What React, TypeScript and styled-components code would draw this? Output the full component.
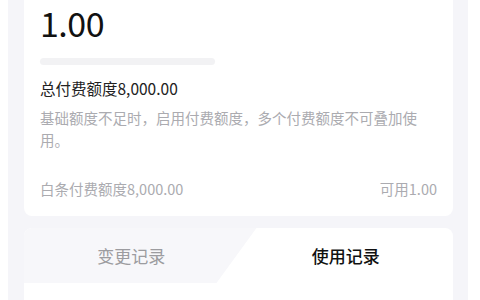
import React, { useState } from 'react';
import styled, { createGlobalStyle } from 'styled-components';

const GlobalStyle = createGlobalStyle`
  html, body {
    margin: 0;
    padding: 0;
    background: #ffffff;
  }
  body {
    padding-left: 8px;
    font-family: "Noto Sans CJK SC", "Noto Sans", sans-serif;
    -webkit-font-smoothing: antialiased;
  }
`;

const Page = styled.div`
  width: 460px;
  min-height: 300px;
  box-sizing: border-box;
  padding: 0 15px 24px 16px;
  background: #f5f5f9;
  display: flex;
  flex-direction: column;
  gap: 12px;
`;

const QuotaCard = styled.section`
  background: #ffffff;
  border-radius: 0 0 8px 8px;
  padding: 0 16px 16px;
  display: flex;
  flex-direction: column;
`;

const Amount = styled.div`
  font-size: 34px;
  line-height: 46px;
  color: #111111;
  letter-spacing: -0.5px;
`;

const Progress = styled.div`
  margin-top: 12px;
  width: 175px;
  height: 7px;
  border-radius: 4px;
  background: #f2f2f4;
  overflow: hidden;
`;

const ProgressFill = styled.div`
  height: 100%;
  background: #e6e6ea;
`;

const TotalLine = styled.div`
  margin-top: 12px;
  font-size: 15.5px;
  line-height: 22px;
  color: #222222;
`;

const Note = styled.p`
  margin: 8px 0 0;
  max-width: 385px;
  font-size: 14.5px;
  line-height: 22px;
  color: #ababb0;
`;

const FooterRow = styled.div`
  margin-top: 27px;
  display: flex;
  justify-content: space-between;
  align-items: center;
  font-size: 14.5px;
  line-height: 22px;
  color: #ababb0;
`;

const TabsCard = styled.section`
  background: #ffffff;
  border-radius: 8px;
  overflow: hidden;
  min-height: 80px;
`;

const TabRow = styled.div`
  display: flex;
  height: 55px;
`;

const Tab = styled.button<{ $active: boolean; $first: boolean }>`
  position: relative;
  flex: 1;
  border: none;
  padding: 0;
  font-family: inherit;
  font-size: 17px;
  font-weight: ${p => (p.$active ? 500 : 400)};
  color: ${p => (p.$active ? '#111111' : '#9c9ca0')};
  background: transparent;
  cursor: pointer;

  /* slanted grey backdrop behind the inactive tab */
  &::before {
    content: '';
    display: ${p => (p.$active ? 'none' : 'block')};
    position: absolute;
    top: 0;
    bottom: 0;
    ${p => (p.$first ? 'left: 0; right: -18px;' : 'left: -18px; right: 0;')}
    background: #f7f7fa;
    clip-path: ${p =>
      p.$first
        ? 'polygon(0 0, 100% 0, calc(100% - 40px) 100%, 0 100%)'
        : 'polygon(0 0, 100% 0, 100% 100%, 40px 100%)'};
  }
`;

const TabLabel = styled.span`
  position: relative;
`;

const tabs = ['变更记录', '使用记录'];

export default function App() {
  const [active, setActive] = useState(1);

  return (
    <>
      <GlobalStyle />
      <Page>
        <QuotaCard>
          <Amount>1.00</Amount>
          <Progress>
            <ProgressFill style={{ width: `${(1 / 8000) * 100}%` }} />
          </Progress>
          <TotalLine>总付费额度8,000.00</TotalLine>
          <Note>基础额度不足时，启用付费额度，多个付费额度不可叠加使用。</Note>
          <FooterRow>
            <span>白条付费额度8,000.00</span>
            <span>可用1.00</span>
          </FooterRow>
        </QuotaCard>
        <TabsCard>
          <TabRow>
            {tabs.map((label, i) => (
              <Tab
                key={label}
                $active={active === i}
                $first={i === 0}
                onClick={() => setActive(i)}
              >
                <TabLabel>{label}</TabLabel>
              </Tab>
            ))}
          </TabRow>
        </TabsCard>
      </Page>
    </>
  );
}
